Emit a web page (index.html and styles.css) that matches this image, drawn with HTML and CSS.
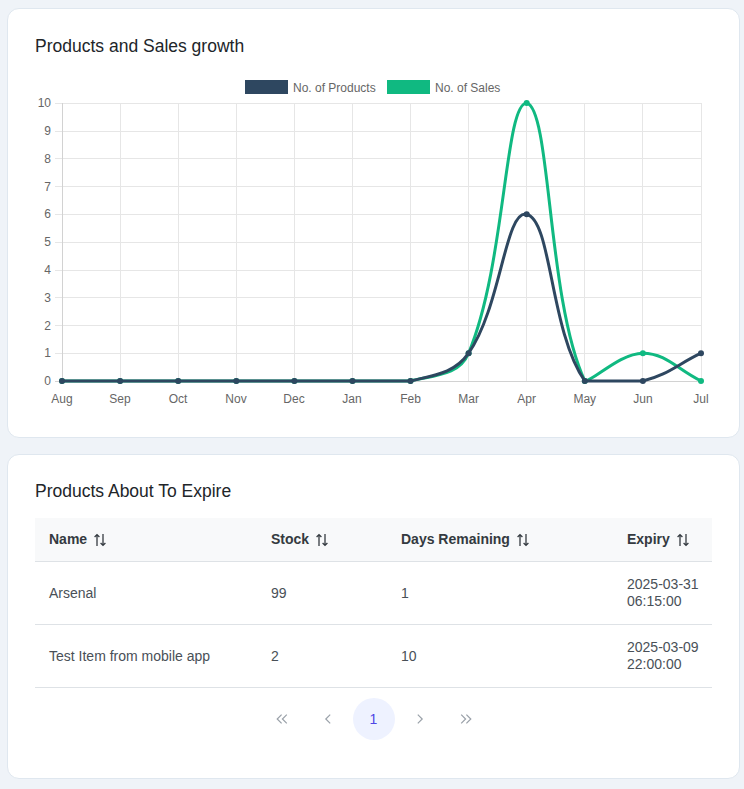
FILE: index.html
```html
<!DOCTYPE html>
<html lang="en">
<head>
<meta charset="utf-8">
<title>Dashboard</title>
<link rel="stylesheet" href="styles.css">
</head>
<body>
<div class="page">
  <section class="card chart-card">
    <h5 class="card-title">Products and Sales growth</h5>
    <svg class="chart" width="677" height="341" viewBox="35 70 677 341" xmlns="http://www.w3.org/2000/svg">
      <!-- legend -->
      <rect x="245" y="80" width="43" height="14" fill="#2e4760"/>
      <text class="legend-text" x="293" y="91.5">No. of Products</text>
      <rect x="387" y="80" width="43" height="14" fill="#10b981"/>
      <text class="legend-text" x="435" y="91.5">No. of Sales</text>

      <!-- grid -->
      <g class="grid" shape-rendering="crispEdges">
        <line x1="55" y1="103.5" x2="701.5" y2="103.5"/>
        <line x1="55" y1="131.5" x2="701.5" y2="131.5"/>
        <line x1="55" y1="158.5" x2="701.5" y2="158.5"/>
        <line x1="55" y1="186.5" x2="701.5" y2="186.5"/>
        <line x1="55" y1="214.5" x2="701.5" y2="214.5"/>
        <line x1="55" y1="242.5" x2="701.5" y2="242.5"/>
        <line x1="55" y1="270.5" x2="701.5" y2="270.5"/>
        <line x1="55" y1="297.5" x2="701.5" y2="297.5"/>
        <line x1="55" y1="325.5" x2="701.5" y2="325.5"/>
        <line x1="55" y1="353.5" x2="701.5" y2="353.5"/>
        <line x1="120.5" y1="103" x2="120.5" y2="381"/>
        <line x1="178.5" y1="103" x2="178.5" y2="381"/>
        <line x1="236.5" y1="103" x2="236.5" y2="381"/>
        <line x1="294.5" y1="103" x2="294.5" y2="381"/>
        <line x1="352.5" y1="103" x2="352.5" y2="381"/>
        <line x1="410.5" y1="103" x2="410.5" y2="381"/>
        <line x1="468.5" y1="103" x2="468.5" y2="381"/>
        <line x1="526.5" y1="103" x2="526.5" y2="381"/>
        <line x1="584.5" y1="103" x2="584.5" y2="381"/>
        <line x1="642.5" y1="103" x2="642.5" y2="381"/>
        <line x1="701.5" y1="103" x2="701.5" y2="381"/>
      </g>
      <g class="axis" shape-rendering="crispEdges">
        <line x1="62.5" y1="103" x2="62.5" y2="381.5"/>
        <line x1="55" y1="381.5" x2="701.5" y2="381.5"/>
      </g>

      <!-- y labels -->
      <g class="tick-text y-ticks">
        <text x="51" y="107">10</text>
        <text x="51" y="135">9</text>
        <text x="51" y="162.5">8</text>
        <text x="51" y="190.5">7</text>
        <text x="51" y="218">6</text>
        <text x="51" y="246">5</text>
        <text x="51" y="274">4</text>
        <text x="51" y="301.5">3</text>
        <text x="51" y="329.5">2</text>
        <text x="51" y="357">1</text>
        <text x="51" y="385">0</text>
      </g>
      <!-- x labels -->
      <g class="tick-text x-ticks">
        <text x="62" y="403">Aug</text>
        <text x="120" y="403">Sep</text>
        <text x="178" y="403">Oct</text>
        <text x="236" y="403">Nov</text>
        <text x="294" y="403">Dec</text>
        <text x="352" y="403">Jan</text>
        <text x="410.5" y="403">Feb</text>
        <text x="468.6" y="403">Mar</text>
        <text x="526.7" y="403">Apr</text>
        <text x="584.8" y="403">May</text>
        <text x="642.9" y="403">Jun</text>
        <text x="701" y="403">Jul</text>
      </g>

      <!-- sales (drawn first, below) -->
      <path class="line sales" d="M62,381 L410.5,381 C435,375.15 459.3,375.5 468.6,353.2 C505.8,264.3 504.6,103 526.7,103 C551.1,108.8 546.9,299.4 584.8,381 C593.4,381 619.7,353.2 642.9,353.2 C666.1,353.2 677.8,369.9 701,381"/>
      <g class="pts sales-pts">
        <circle cx="62" cy="381" r="3"/>
        <circle cx="120.1" cy="381" r="3"/>
        <circle cx="178.2" cy="381" r="3"/>
        <circle cx="236.3" cy="381" r="3"/>
        <circle cx="294.4" cy="381" r="3"/>
        <circle cx="352.5" cy="381" r="3"/>
        <circle cx="410.5" cy="381" r="3"/>
        <circle cx="468.6" cy="353.2" r="3"/>
        <circle cx="526.7" cy="103" r="3"/>
        <circle cx="584.8" cy="381" r="3"/>
        <circle cx="642.9" cy="353.2" r="3"/>
        <circle cx="701" cy="381" r="3"/>
      </g>

      <!-- products (on top) -->
      <path class="line products" d="M62,381 L410.5,381 C435,375.15 454.7,373.2 468.6,353.2 C501.2,306.5 505.3,209.1 526.7,214.2 C551.8,220.2 549.8,330.8 584.8,381 C596.3,381 620.9,381 642.9,381 C667.3,375.2 677.8,364.3 701,353.2"/>
      <g class="pts products-pts">
        <circle cx="62" cy="381" r="3"/>
        <circle cx="120.1" cy="381" r="3"/>
        <circle cx="178.2" cy="381" r="3"/>
        <circle cx="236.3" cy="381" r="3"/>
        <circle cx="294.4" cy="381" r="3"/>
        <circle cx="352.5" cy="381" r="3"/>
        <circle cx="410.5" cy="381" r="3"/>
        <circle cx="468.6" cy="353.2" r="3"/>
        <circle cx="526.7" cy="214.2" r="3"/>
        <circle cx="584.8" cy="381" r="3"/>
        <circle cx="642.9" cy="381" r="3"/>
        <circle cx="701" cy="353.2" r="3"/>
      </g>
    </svg>
  </section>

  <section class="card table-card">
    <h5 class="card-title">Products About To Expire</h5>
    <table class="data-table">
      <thead>
        <tr>
          <th class="col-name"><span class="th-inner">Name <svg class="sort-icon" width="14" height="14" viewBox="0 0 14 14"><path d="M4 13V1.6M1.6 4L4 1.6 6.4 4M10 1v11.4M7.6 10L10 12.4 12.4 10"/></svg></span></th>
          <th class="col-stock"><span class="th-inner">Stock <svg class="sort-icon" width="14" height="14" viewBox="0 0 14 14"><path d="M4 13V1.6M1.6 4L4 1.6 6.4 4M10 1v11.4M7.6 10L10 12.4 12.4 10"/></svg></span></th>
          <th class="col-days"><span class="th-inner">Days Remaining <svg class="sort-icon" width="14" height="14" viewBox="0 0 14 14"><path d="M4 13V1.6M1.6 4L4 1.6 6.4 4M10 1v11.4M7.6 10L10 12.4 12.4 10"/></svg></span></th>
          <th class="col-expiry"><span class="th-inner">Expiry <svg class="sort-icon" width="14" height="14" viewBox="0 0 14 14"><path d="M4 13V1.6M1.6 4L4 1.6 6.4 4M10 1v11.4M7.6 10L10 12.4 12.4 10"/></svg></span></th>
        </tr>
      </thead>
      <tbody>
        <tr>
          <td>Arsenal</td>
          <td>99</td>
          <td>1</td>
          <td class="expiry"><span class="nb">2025-03-31</span> <span class="nb">06:15:00</span></td>
        </tr>
        <tr>
          <td>Test Item from mobile app</td>
          <td>2</td>
          <td>10</td>
          <td class="expiry"><span class="nb">2025-03-09</span> <span class="nb">22:00:00</span></td>
        </tr>
      </tbody>
    </table>
    <nav class="paginator">
      <button class="page-btn nav" aria-label="First"><svg width="14" height="14" viewBox="0 0 14 14"><path d="M6.6 2.6L2.2 7l4.4 4.4M11.8 2.6L7.4 7l4.4 4.4"/></svg></button>
      <button class="page-btn nav" aria-label="Previous"><svg width="14" height="14" viewBox="0 0 14 14"><path d="M9.2 2.6L4.8 7l4.4 4.4"/></svg></button>
      <button class="page-btn current">1</button>
      <button class="page-btn nav" aria-label="Next"><svg width="14" height="14" viewBox="0 0 14 14"><path d="M4.8 2.6L9.2 7l-4.4 4.4"/></svg></button>
      <button class="page-btn nav" aria-label="Last"><svg width="14" height="14" viewBox="0 0 14 14"><path d="M2.2 2.6L6.6 7l-4.4 4.4M7.4 2.6L11.8 7l-4.4 4.4"/></svg></button>
    </nav>
  </section>
</div>
</body>
</html>
```

FILE: styles.css
```css
* { box-sizing: border-box; }

html, body {
  margin: 0;
  padding: 0;
  background: #eff3f8;
  font-family: "Liberation Sans", Arial, sans-serif;
  color: #212529;
}

.page {
  display: flex;
  flex-direction: column;
  gap: 16px;
  padding: 8px 4px 12px 7px;
}

.card {
  background: #ffffff;
  border: 1px solid #dfe7ef;
  border-radius: 12px;
  padding: 26px 27px 26px;
}

.card-title {
  margin: 0;
  font-size: 17.5px;
  font-weight: 400;
  line-height: 22px;
  color: #212529;
}

.chart-card .card-title {
  margin-bottom: 13px;
}

.table-card {
  padding-top: 25px;
  padding-bottom: 28px;
}

.table-card .card-title {
  margin-bottom: 16px;
}

.chart {
  display: block;
}

.legend-text {
  font-family: "Liberation Sans", Arial, sans-serif;
  font-size: 12px;
  fill: #666666;
}

.grid line {
  stroke: #e6e6e6;
  stroke-width: 1;
}

.axis line {
  stroke: #d2d2d2;
  stroke-width: 1;
}

.tick-text text {
  font-family: "Liberation Sans", Arial, sans-serif;
  font-size: 12px;
  fill: #666666;
}

.y-ticks text { text-anchor: end; }
.x-ticks text { text-anchor: middle; }

.line {
  fill: none;
  stroke-width: 3;
  stroke-linejoin: round;
  stroke-linecap: round;
}

.line.sales { stroke: #10b981; }
.line.products { stroke: #2e4760; }

.sales-pts circle { fill: #10b981; }
.products-pts circle { fill: #2e4760; }

/* table */
.data-table {
  width: 100%;
  border-collapse: collapse;
  table-layout: fixed;
  font-size: 14px;
  line-height: 17px;
}

.col-name { width: 222px; }
.col-stock { width: 130px; }
.col-days { width: 226px; }
.col-expiry { width: 99px; }

.data-table th {
  background: #f8f9fa;
  color: #343a40;
  font-weight: 700;
  text-align: left;
  padding: 13px 14px;
  border-bottom: 1px solid #dee2e6;
}

.th-inner {
  display: inline-flex;
  align-items: center;
  white-space: nowrap;
}

.sort-icon {
  margin-left: 6px;
  fill: none;
  stroke: #343a40;
  stroke-width: 1.3;
}

.data-table td {
  color: #495057;
  padding: 14px 14px;
  border-bottom: 1px solid #dee2e6;
  vertical-align: middle;
}

.data-table td.expiry {
  padding-right: 8px;
}

.nb { white-space: nowrap; }

/* paginator */
.paginator {
  display: flex;
  justify-content: center;
  align-items: center;
  gap: 4px;
  padding: 10px 0;
}

.page-btn {
  width: 42px;
  height: 42px;
  border: none;
  border-radius: 50%;
  background: transparent;
  display: flex;
  align-items: center;
  justify-content: center;
  padding: 0;
  font-family: "Liberation Sans", Arial, sans-serif;
  font-size: 14px;
}

.page-btn svg {
  fill: none;
  stroke: #9aa1a9;
  stroke-width: 1.2;
}

.page-btn.current {
  background: #eef2ff;
  color: #4f46e5;
}
```
